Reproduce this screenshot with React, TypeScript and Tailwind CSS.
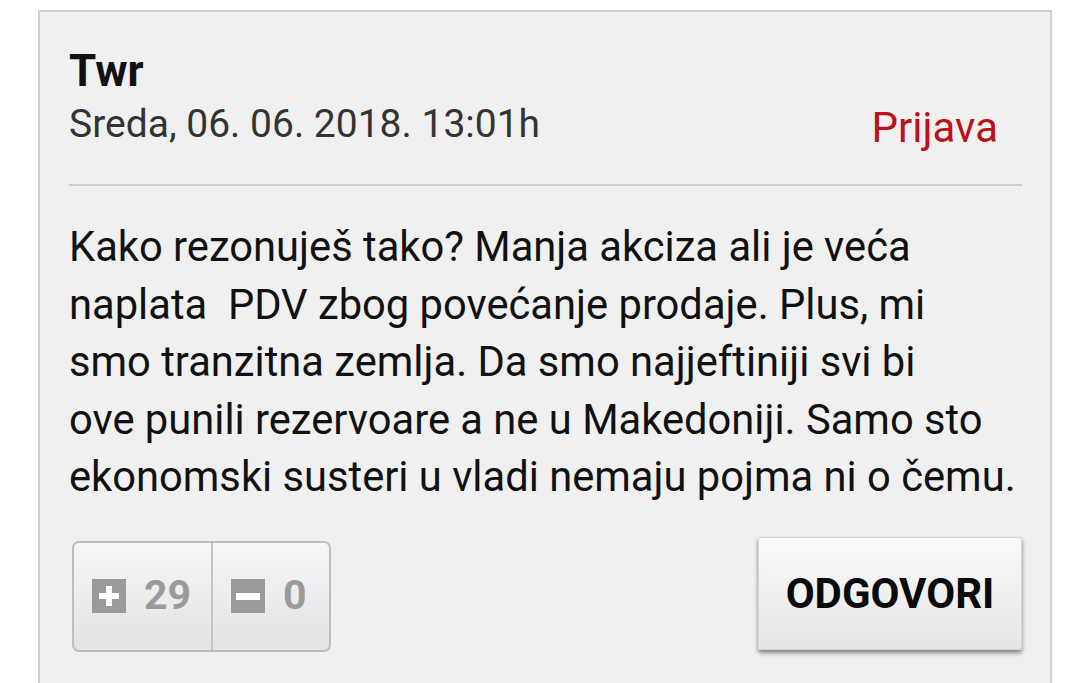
export default function App() {
  return (
    <div className="min-h-screen w-full bg-white pt-[10px] pl-[38px] pr-[23px] font-['Roboto',sans-serif] overflow-hidden h-[683px]">
      <div className="border-2 border-[#cfcfcf] bg-[#f0f0f0] h-[720px] pl-[29px] pr-[28px]">
        <div className="pt-[31px]">
          <div className="text-[44px] font-bold leading-[56px] text-[#111]">Twr</div>
          <div className="flex justify-between items-end pr-[24px]">
            <span className="text-[39px] leading-[50px] text-[#333]">Sreda, 06. 06. 2018. 13:01h</span>
            <span className="text-[42px] leading-[50px] text-[#bb111a] translate-y-[4px]">Prijava</span>
          </div>
        </div>
        <div className="mt-[35px] border-t-2 border-[#cdcdcd]" />
        <p className="mt-[32px] text-[41.7px] leading-[57.5px] text-[#111] whitespace-pre">
          {"Kako rezonuješ tako? Manja akciza ali je veća\nnaplata  PDV zbog povećanje prodaje. Plus, mi\nsmo tranzitna zemlja. Da smo najjeftiniji svi bi\nove punili rezervoare a ne u Makedoniji. Samo sto\nekonomski susteri u vladi nemaju pojma ni o čemu."}
        </p>
        <div className="mt-[31px] flex justify-between items-start">
          <div className="ml-[3px] mt-[4px] flex h-[111px] rounded-[7px] border-2 border-[#bdbdbd] bg-gradient-to-b from-[#f7f7f7] to-[#e2e2e2] overflow-hidden">
            <div className="flex items-center gap-[18px] pl-[18px] pr-[20px] border-r-2 border-[#c4c4c4]">
              <span className="w-[34px] h-[34px] bg-[#9a9a9a] flex items-center justify-center">
                <svg width="22" height="22" viewBox="0 0 22 22">
                  <rect x="8" y="1" width="6" height="20" fill="#fff" />
                  <rect x="1" y="8" width="20" height="6" fill="#fff" />
                </svg>
              </span>
              <span className="text-[41px] font-bold text-[#9a9a9a]">29</span>
            </div>
            <div className="flex items-center gap-[18px] pl-[18px] pr-[22px]">
              <span className="w-[34px] h-[34px] bg-[#9a9a9a] flex items-center justify-center">
                <span className="w-[24px] h-[7px] bg-[#fff]" />
              </span>
              <span className="text-[41px] font-bold text-[#9a9a9a]">0</span>
            </div>
          </div>
          <button className="w-[264px] h-[113px] rounded-[2px] border border-[#d6d6d6] bg-gradient-to-b from-[#fafafa] to-[#e6e6e6] shadow-[0_3px_4px_rgba(0,0,0,0.45)] text-[42px] font-bold text-[#0a0a0a]">
            ODGOVORI
          </button>
        </div>
      </div>
    </div>
  );
}
